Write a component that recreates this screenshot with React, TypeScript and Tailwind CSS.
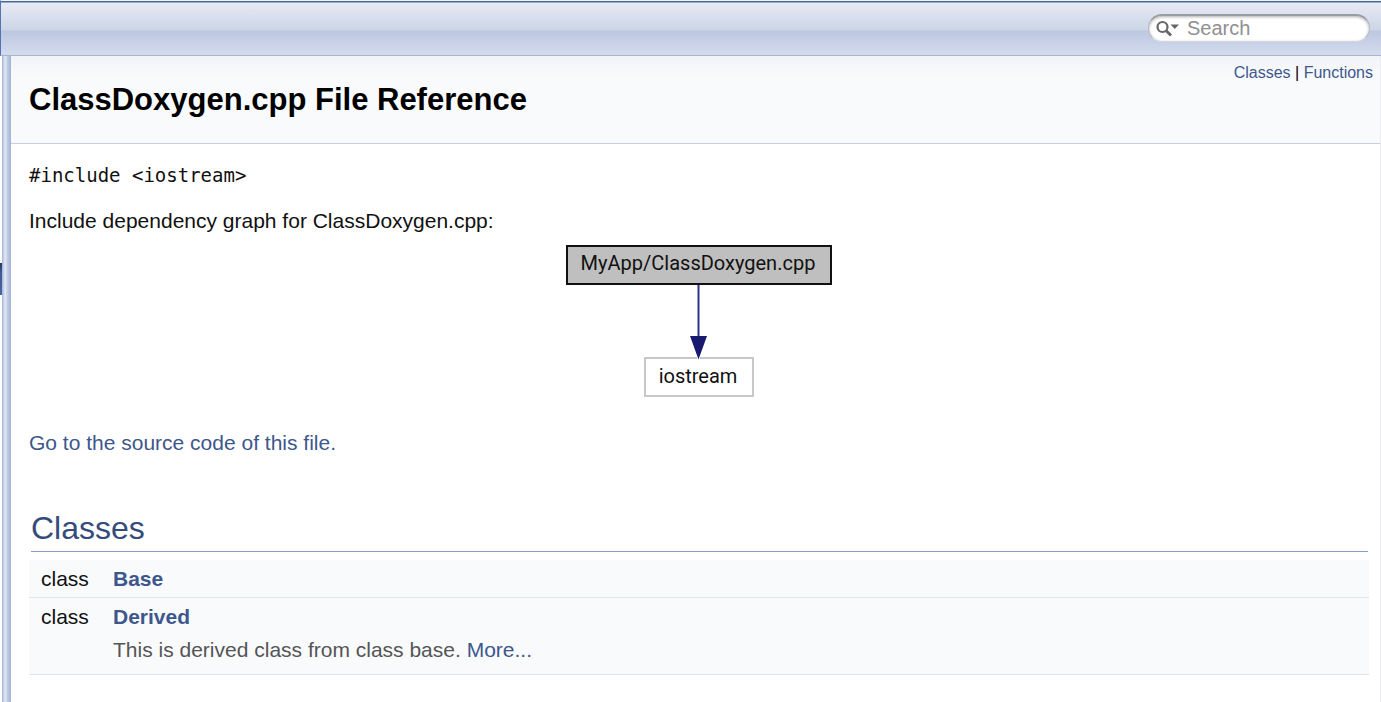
import type { ReactNode } from "react";

type Member = { kind: string; name: string; brief?: string };

const members: Member[] = [
  { kind: "class", name: "Base" },
  { kind: "class", name: "Derived", brief: "This is derived class from class base." },
];

function Link({ children, className = "" }: { children: ReactNode; className?: string }) {
  return (
    <a href="#" className={`text-[#3d578c] hover:underline ${className}`}>
      {children}
    </a>
  );
}

function SearchBox() {
  return (
    <form className="flex h-7 w-[222px] items-center rounded-full border-x border-t-2 border-b border-x-[#b4b8c0] border-t-[#999ca3] border-b-[#d4d7dd] bg-white pl-[7px] shadow-[inset_0_1px_3px_#b0b0b0]">
      <svg viewBox="0 0 24 18" className="h-[18px] w-6 shrink-0" aria-hidden="true">
        <circle cx="6.500" cy="7" r="5" fill="none" stroke="#666" strokeWidth="2.2" />
        <path d="M10 10.500 15 15.500" stroke="#666" strokeWidth="2.8" />
        <path d="M14.500 4.500h8.500L18.750 9z" fill="#666" />
      </svg>
      <input
        type="text"
        aria-label="Search"
        placeholder="Search"
        className="mb-[2px] ml-[7px] min-w-0 flex-1 bg-transparent text-xl leading-6 outline-none placeholder:text-[#909090]"
      />
    </form>
  );
}

function DependencyGraph() {
  return (
    <svg viewBox="0 0 268 154" className="mx-auto block h-[154px] w-[268px]" role="img" aria-label="Include dependency graph">
      <rect x="2" y="2" width="264" height="38" fill="#bfbfbf" stroke="#111" strokeWidth="2" />
      <text x="133" y="26" textAnchor="middle" fontSize="20" fontFamily="Roboto, sans-serif" fill="#111">
        MyApp/ClassDoxygen.cpp
      </text>
      <path d="M133.500 41V94" stroke="#30308a" strokeWidth="2" />
      <path d="M125 92h17l-8.500 23.500z" fill="#191970" />
      <path d="M132 114H80v38h108v-38h-53" fill="none" stroke="#c8c8c8" strokeWidth="2" />
      <text x="133" y="139" textAnchor="middle" fontSize="20" fontFamily="Roboto, sans-serif" fill="#111">
        iostream
      </text>
    </svg>
  );
}

export default function App() {
  return (
    <div className="flex min-h-screen flex-col bg-white font-['Liberation_Sans',Arial,sans-serif] text-black">
      <nav className="flex h-14 items-center justify-end border-t border-b border-l border-t-[#f0f3f8] border-b-[#a9b5d8] border-l-[#5373b4] bg-[linear-gradient(#466a94_0px,#466a94_1px,#e6eaf3_2px,#ccd5e7_29px,#bcc7e1_30px,#d2daec_52px)] pr-[11px]">
        <SearchBox />
      </nav>
      <div className="flex flex-1">
        <aside className="w-[2px] pt-[207px]">
          <div className="h-8 bg-[linear-gradient(#26375d,#3f5a94_30%,#4665a2)]" />
        </aside>
        <div className="w-[9px] bg-[linear-gradient(to_right,#a3b4d7,#c9d4e8_20%,#e4e9f4_35%,#c3cee6_60%,#9fb1d5)]" />
        <main className="min-w-0 flex-1 border-r border-[#ececf0]">
          <header className="flex h-[88px] justify-between border-b border-[#c4cfe5] bg-[linear-gradient(#f2f3f8,#f9fafc_20px)] pr-[7px] pl-[18px]">
            <h1 className="pt-6 text-[31px] leading-10 font-bold">ClassDoxygen.cpp File Reference</h1>
            <p className="pt-[7px] text-base leading-5">
              <Link>Classes</Link> | <Link>Functions</Link>
            </p>
          </header>
          <div className="pr-[11px] pl-[18px] text-[21px] leading-6 text-[#111]">
            <p className="pt-5 font-['DejaVu_Sans_Mono',monospace] text-[19px] leading-[22px]">#include &lt;iostream&gt;</p>
            <p className="pt-[23px]">Include dependency graph for ClassDoxygen.cpp:</p>
            <div className="pt-[11px]">
              <DependencyGraph />
            </div>
            <p className="pt-[33px]">
              <Link>Go to the source code of this file.</Link>
            </p>
            <h2 className="mt-[54px] mr-px ml-[2px] border-b border-[#879ecb] pb-1 text-[32px] leading-[38px] text-[#354c7b]">
              Classes
            </h2>
            <table className="mt-2 w-full border-collapse">
              <tbody>
                {members.map((m) => (
                  <tr key={m.name} className="border-b border-[#dee4f0] bg-[#f9fafc]">
                    <td className="w-[84px] pt-[7px] pb-[6px] pl-3 align-top">{m.kind}</td>
                    <td className="pt-[7px] pb-[6px]">
                      <Link className="font-bold">{m.name}</Link>
                      {m.brief && (
                        <p className="pt-[9px] pb-[6px] text-[#555]">
                          {m.brief} <Link>More...</Link>
                        </p>
                      )}
                    </td>
                  </tr>
                ))}
              </tbody>
            </table>
          </div>
        </main>
      </div>
    </div>
  );
}
